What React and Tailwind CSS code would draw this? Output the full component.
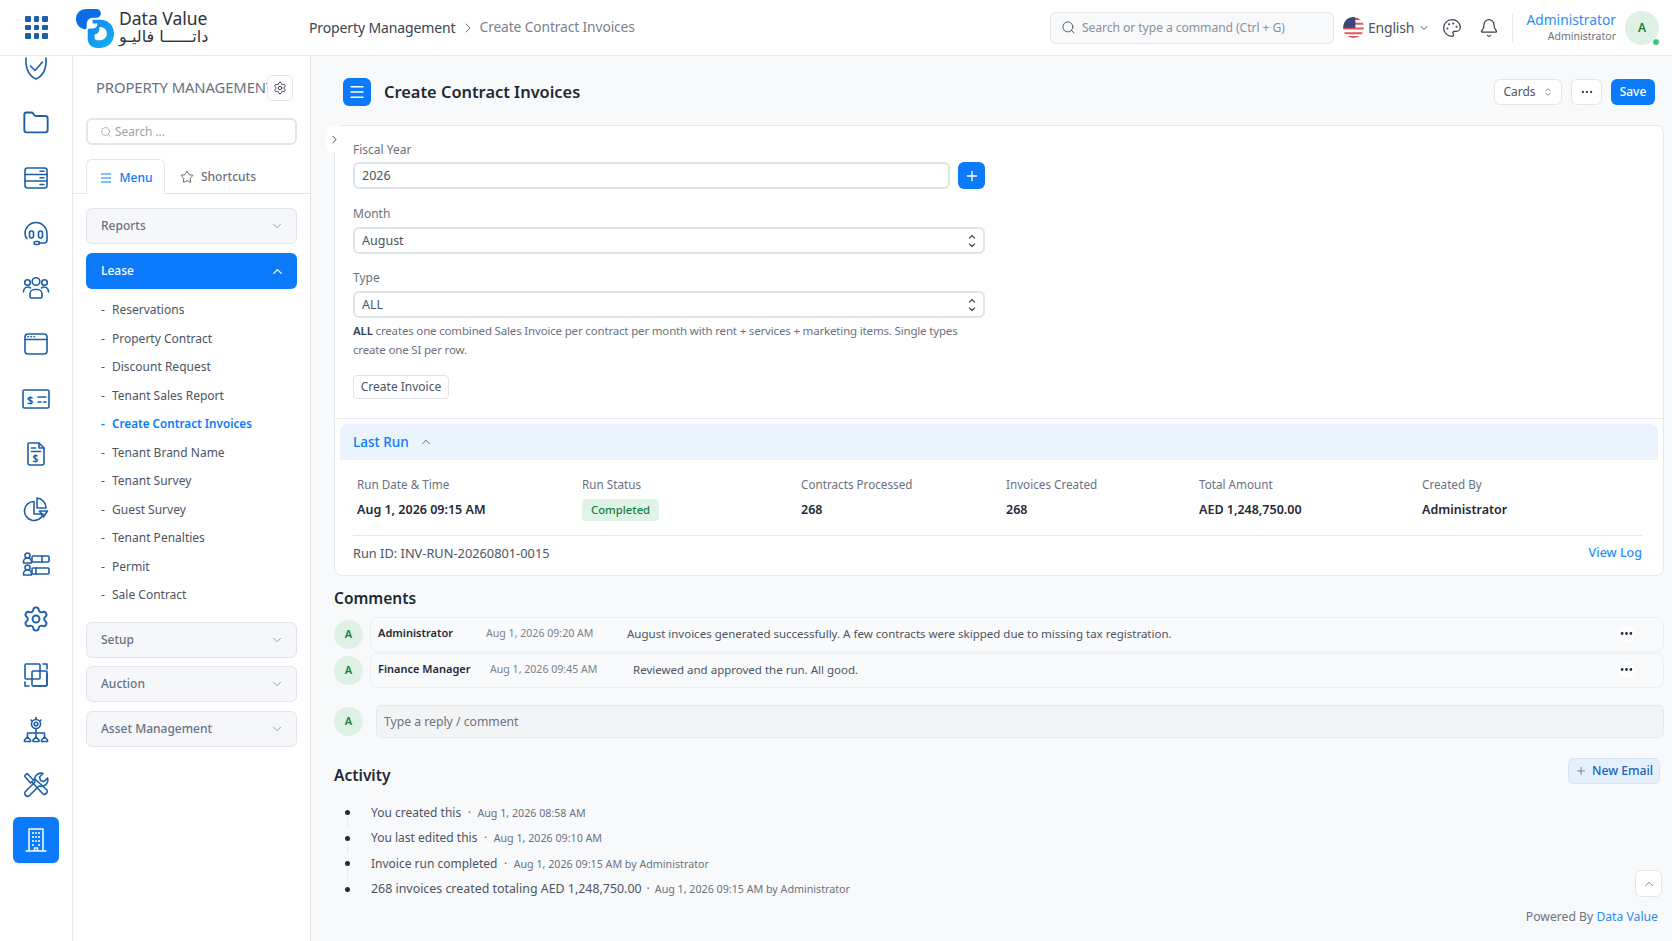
import React from 'react';
import {
  Folder, Settings, ChevronDown, ChevronUp, ChevronRight,
  ChevronsUpDown, Search, Menu, Star, Plus, MoreHorizontal, Palette, Bell,
} from 'lucide-react';

const S = ({ children, className = 'w-7 h-7' }) => (
  <svg viewBox="0 0 28 28" fill="none" stroke="currentColor" strokeWidth="1.6" strokeLinecap="round" strokeLinejoin="round" className={className}>
    {children}
  </svg>
);

const ShieldIcon = () => (
  <S>
    <path d="M4 4c-.5 9 1 17 10 21 9-4 10.500-12 10-21" />
    <path d="m8.500 12 4.500 4.500L20.500 8" />
  </S>
);
const ServerIcon = () => (
  <S>
    <rect x="3" y="4" width="22" height="20" rx="2.5" />
    <path d="M3 10.500h22M3 17h22M18 7.200h4M18 13.800h4M18 20.500h4" />
  </S>
);
const HeadsetIcon = () => (
  <S>
    <path d="M5 19.500C3.500 18 3 16 3 14.500a11 11 0 0 1 22 0V21a3 3 0 0 1-3 3h-5" />
    <rect x="7.500" y="12" width="4" height="7" rx="2" />
    <rect x="16.500" y="12" width="4" height="7" rx="2" />
    <rect x="12" y="22.500" width="5.500" height="3" rx="1.500" />
  </S>
);
const GroupIcon = () => (
  <S>
    <circle cx="14" cy="7.500" r="3.800" />
    <circle cx="5.500" cy="8.500" r="2.800" />
    <circle cx="22.500" cy="8.500" r="2.800" />
    <path d="M8 23v-3a4.500 4.500 0 0 1 4.500-4.500h3A4.500 4.500 0 0 1 20 20v3a1 1 0 0 1-1 1H9a1 1 0 0 1-1-1Z" />
    <path d="M1.500 18c0-3 2-5 4.500-5 1 0 2 .3 2.500 1M26.500 18c0-3-2-5-4.500-5-1 0-2 .3-2.500 1" />
  </S>
);
const WindowIcon = () => (
  <S>
    <rect x="3" y="4" width="22" height="20" rx="3" />
    <path d="M3 9.500h22M6 6.800h.5M9 6.800h.5M12 6.800h.5" />
  </S>
);
const CardIcon = () => (
  <S>
    <rect x="1" y="5" width="26" height="18" rx="1.500" />
    <path d="M16 12h8M16 17h3M21.500 17H24" />
    <text x="5" y="18.500" fontSize="11" fontWeight="700" fill="currentColor" stroke="none">$</text>
  </S>
);
const BillIcon = () => (
  <S>
    <path d="M7 3h10l5 5v15a2 2 0 0 1-2 2H8a2 2 0 0 1-2-2V4a1 1 0 0 1 1-1Z" />
    <path d="M17 3v5h5M9.500 8h4M9.500 11.500h9" />
    <text x="10.500" y="22" fontSize="10" fontWeight="700" fill="currentColor" stroke="none">$</text>
  </S>
);
const PieIcon = () => (
  <S>
    <path d="M12 6.500a9.500 9.500 0 1 0 9 12.500h-9Z" />
    <path d="M15 3v10h9a10 10 0 0 0-9-10ZM17.500 16h8l-4 6Z" />
  </S>
);
const PeopleBarsIcon = () => (
  <S>
    <circle cx="5.500" cy="5.500" r="2.500" />
    <path d="M1.500 13v-1a4 4 0 0 1 8 0v1Z" />
    <rect x="10" y="6" width="17" height="6" rx="1" />
    <path d="M20 6v6" />
    <circle cx="5.500" cy="17.500" r="2.500" />
    <path d="M1.500 25v-1a4 4 0 0 1 8 0v1Z" />
    <rect x="10" y="18" width="17" height="6" rx="1" />
    <path d="M14 18v6" />
  </S>
);
const SquaresIcon = () => (
  <S>
    <path d="M21 3h4v5M25 13v10a2 2 0 0 1-2 2H12M7 25H3v-4" />
    <rect x="3" y="3" width="15" height="15" rx="1" />
    <rect x="10" y="10" width="15" height="15" rx="1" />
  </S>
);
const OrgIcon = () => (
  <S>
    <circle cx="14" cy="8" r="4.500" />
    <circle cx="14" cy="8" r="1.800" />
    <path d="M14 1.500v2M9 4l1 1M19 4l-1 1M14 12.500V17M5.500 21v-4h17v4M14 17v4" />
    <path d="M2.500 25.500v-1.500l3-3 3 3v1.500ZM11 25.500v-1.500l3-3 3 3v1.500ZM19.500 25.500v-1.500l3-3 3 3v1.500Z" />
  </S>
);
const ToolsIcon = () => (
  <S>
    <path d="M5 2.500 2.500 5l6 7 3-3ZM10 11l11 12a3 3 0 0 0 4-4L13 8" />
    <path d="M25.500 7 22 10.500 18.500 9.500 17.500 6 21 2.500a6.500 6.500 0 0 0-8 8.500L3 21a3 3 0 0 0 4 4l10-10a6.500 6.500 0 0 0 8.500-8Z" />
  </S>
);
const BuildingIcon = () => (
  <S>
    <path d="M7 25V3h14v22M4 25h20M12.500 25v-3h3v3" strokeWidth="1.500" />
    <path d="M11 7h.01M14 7h.01M17 7h.01M11 11h.01M14 11h.01M17 11h.01M11 15h.01M14 15h.01M17 15h.01M11 19h.01M17 19h.01" strokeWidth="2" />
  </S>
);
const UpDown = () => (
  <svg viewBox="0 0 10 16" fill="none" stroke="currentColor" strokeWidth="1.300" strokeLinecap="round" strokeLinejoin="round" className="w-[10px] h-[16px]">
    <path d="m2.500 5 2.500-2.500L7.500 5M2.500 11 5 13.500 7.500 11" />
  </svg>
);

const railIcons = [
  <ShieldIcon />,
  <Folder className="w-7 h-7" strokeWidth={1.6} />,
  <ServerIcon />,
  <HeadsetIcon />,
  <GroupIcon />,
  <WindowIcon />,
  <CardIcon />,
  <BillIcon />,
  <PieIcon />,
  <PeopleBarsIcon />,
  <Settings className="w-7 h-7" strokeWidth={1.6} />,
  <SquaresIcon />,
  <OrgIcon />,
  <ToolsIcon />,
];

const leaseItems = [
  'Reservations', 'Property Contract', 'Discount Request', 'Tenant Sales Report', 'Create Contract Invoices',
  'Tenant Brand Name', 'Tenant Survey', 'Guest Survey', 'Tenant Penalties', 'Permit', 'Sale Contract',
];

const runStats = [
  { label: 'Run Date & Time', value: 'Aug 1, 2026 09:15 AM' },
  { label: 'Run Status', badge: 'Completed' },
  { label: 'Contracts Processed', value: '268' },
  { label: 'Invoices Created', value: '268' },
  { label: 'Total Amount', value: 'AED 1,248,750.00' },
  { label: 'Created By', value: 'Administrator' },
];

const comments = [
  { name: 'Administrator', nameW: 'w-[108px]', date: 'Aug 1, 2026 09:20 AM', dateW: 'w-[141px]', text: 'August invoices generated successfully. A few contracts were skipped due to missing tax registration.' },
  { name: 'Finance Manager', nameW: 'w-[112px]', date: 'Aug 1, 2026 09:45 AM', dateW: 'w-[143px]', text: 'Reviewed and approved the run. All good.' },
];

const activity = [
  { text: 'You created this', meta: 'Aug 1, 2026 08:58 AM' },
  { text: 'You last edited this', meta: 'Aug 1, 2026 09:10 AM' },
  { text: 'Invoice run completed', meta: 'Aug 1, 2026 09:15 AM by Administrator' },
  { text: '268 invoices created totaling AED 1,248,750.00', meta: 'Aug 1, 2026 09:15 AM by Administrator', wide: true },
];

const Logo = () => (
  <div className="flex items-center gap-[4px] pl-[3px]">
    <svg viewBox="0 0 40 41" className="w-[39px] h-[40px] shrink-0">
      <defs>
        <linearGradient id="dv" x1="0" y1="0" x2="1" y2="1">
          <stop offset="0" stopColor="#0f86f2" />
          <stop offset="1" stopColor="#1ab0f0" />
        </linearGradient>
      </defs>
      <path d="M10 1h11a4.500 4.500 0 0 1 0 9h-4a6 6 0 0 0-6 6v3.500a3 3 0 0 1-1.500 2.500C4 21 0 17 0 11A10 10 0 0 1 10 1Z" fill="#0a6ce8" />
      <path fillRule="evenodd" d="M17 12h8c8 0 14 6 14 14.500S33 41 25 41h-3c-6 0-10-4-10-10V23a2 2 0 0 1 2-2h4a5 5 0 0 0 4-4.500V16h-5ZM24 19.500v2.500a5 5 0 0 1-5 5v3a3 3 0 0 0 3 3h3a6.500 6.500 0 0 0 0-13.500Z" fill="url(#dv)" />
    </svg>
    <div className="leading-none text-[#2c3440]">
      <div className="text-[17.500px] leading-[19px]">Data Value</div>
      <div className="text-[16px] leading-[18px] font-['DejaVu_Sans',sans-serif]" dir="rtl">داتــــــا فاليـو</div>
    </div>
  </div>
);

const Flag = () => (
  <svg viewBox="0 0 22 22" className="w-[21px] h-[21px]">
    <defs>
      <clipPath id="fl"><circle cx="11" cy="11" r="11" /></clipPath>
    </defs>
    <g clipPath="url(#fl)">
      <rect width="22" height="22" fill="#fff" />
      <path d="M0 2h22M0 7h22M0 12h22M0 17h22M0 21h22" stroke="#e0595f" strokeWidth="2.200" />
      <rect width="13" height="11.500" fill="#3b4a7c" />
    </g>
  </svg>
);

const Header = () => (
  <header className="h-[56px] shrink-0 bg-white border-b border-[#e6e8ec] flex items-center text-[#4b5563]">
    <div className="w-[73px] flex justify-center">
      <div className="grid grid-cols-3 gap-[3px]">
        {Array.from({ length: 9 }).map((_, i) => (
          <span key={i} className="w-[5.500px] h-[5.500px] bg-[#1d5ea8] rounded-[1px]" />
        ))}
      </div>
    </div>
    <div className="w-[236px]"><Logo /></div>
    <div className="flex items-center text-[14px] tracking-[-0.12px]">
      <span className="text-[#3b4350]">Property Management</span>
      <ChevronRight className="w-4 h-4 mx-[4px] text-[#6b7280]" strokeWidth={1.5} />
      <span className="text-[#7a828e] text-[13.800px]">Create Contract Invoices</span>
    </div>
    <div className="ml-auto flex items-center">
      <div className="w-[284px] h-[32px] bg-[#f8f9fa] border border-[#e4e6ea] rounded-md flex items-center px-[10px] gap-[6px] text-[#8a919c]">
        <Search className="w-[15px] h-[15px] text-[#4b5563]" strokeWidth={1.5} />
        <span className="mt-[1px] text-[12.200px] tracking-[-0.1px] whitespace-nowrap">Search or type a command (Ctrl + G)</span>
      </div>
      <div className="ml-[9px] flex items-center gap-[4px] w-[99px]">
        <Flag />
        <span className="text-[14px] tracking-[-0.2px] text-[#4b5563]">English</span>
        <ChevronDown className="w-[12px] h-[12px] text-[#4b5563]" />
      </div>
      <Palette className="w-[20px] h-[20px] text-[#374151]" strokeWidth={1.5} />
      <Bell className="w-[20px] h-[20px] text-[#374151] ml-[17px]" strokeWidth={1.5} />
      <div className="w-px h-[28px] bg-[#e6e8ec] ml-[13px]" />
      <div className="ml-[13px] w-[90px] text-right leading-none">
        <div className="text-[13.800px] text-[#2b8df5]">Administrator</div>
        <div className="text-[10.500px] text-[#6b7280] mt-[4px]">Administrator</div>
      </div>
      <div className="relative ml-[9px] mr-[13px] w-[34px] h-[34px] rounded-full bg-[#dff1e5] text-[#15803d] text-[12px] font-semibold flex items-center justify-center">
        A
        <span className="absolute right-[-1px] bottom-[-1px] w-[8px] h-[8px] rounded-full bg-[#34c77b] border border-white" />
      </div>
    </div>
  </header>
);

const Rail = () => (
  <aside className="w-[73px] shrink-0 bg-white border-r border-[#e6e8ec] overflow-hidden">
    <div className="-mt-[16px] flex flex-col items-center">
      {railIcons.map((icon, i) => (
        <div key={i} className="h-[55.200px] w-full flex items-center justify-center text-[#1d5ea8]">
          {icon}
        </div>
      ))}
      <div className="w-[46px] h-[46px] mt-[4px] rounded-md bg-[#0b7bfb] text-white flex items-center justify-center shadow-sm">
        <BuildingIcon />
      </div>
    </div>
  </aside>
);

const AccordionHead = ({ label, mt = 'mt-[8.500px]' }) => (
  <div className={`${mt} h-[36px] mx-[13px] rounded-md bg-[#f5f7fb] border border-[#e2e5ea] flex items-center justify-between pl-[14px] pr-[12px] text-[#6b7280]`}>
    <span className="text-[12px] font-medium">{label}</span>
    <ChevronDown className="w-[14px] h-[14px] text-[#8a919c]" strokeWidth={1.5} />
  </div>
);

const Sidebar = () => (
  <aside className="w-[238px] shrink-0 bg-white border-r border-[#e6e8ec] overflow-hidden">
    <div className="mt-[19px] h-[26px] flex items-center pl-[23px] pr-[17px]">
      <div className="flex-1 min-w-0 pb-[2px] overflow-hidden whitespace-nowrap text-[14.800px] tracking-[-0.1px] text-[#6b7280] leading-[25px]">PROPERTY MANAGEMENT</div>
      <div className="w-[26px] h-[26px] shrink-0 rounded-md bg-white border border-[#e2e5ea] flex items-center justify-center text-[#374151]">
        <Settings className="w-[14px] h-[14px]" strokeWidth={1.6} />
      </div>
    </div>
    <div className="mt-[17px] mx-[13px] h-[27px] rounded-md border-2 border-[#e2e5ea] bg-white flex items-center pl-[12px] gap-[3px] text-[#9aa1ab]">
      <Search className="w-[12px] h-[12px]" strokeWidth={1.6} />
      <span className="text-[11.800px]">Search ...</span>
    </div>
    <div className="mt-[14px] h-[35px] border-b border-[#e2e5ea] flex pl-[13px] text-[12px] font-medium">
      <div className="w-[79px] h-[35px] pt-[2px] bg-white border border-[#e2e5ea] border-b-white rounded-t-md flex items-center justify-center gap-[7px] text-[#0b7bfb]">
        <Menu className="w-[14px] h-[14px]" strokeWidth={1.8} />
        Menu
      </div>
      <div className="ml-[15px] pt-[2px] flex items-center gap-[7px] text-[#6b7280]">
        <Star className="w-[14px] h-[14px] text-[#4b5563]" strokeWidth={1.5} />
        Shortcuts
      </div>
    </div>
    <AccordionHead label="Reports" mt="mt-[14px]" />
    <div className="mt-[9px] h-[36px] mx-[13px] rounded-md bg-[#0b7bfb] flex items-center justify-between pl-[15px] pr-[12px] text-white">
      <span className="text-[12px] font-medium">Lease</span>
      <ChevronUp className="w-[15px] h-[15px]" strokeWidth={2} />
    </div>
    <ul className="mt-[7px] pl-[28px] text-[12px] text-[#4b5563]">
      {leaseItems.map((item) => {
        const active = item === 'Create Contract Invoices';
        return (
          <li key={item} className={`h-[28.500px] flex items-center ${active ? 'text-[#0b7bfb] font-semibold text-[11.700px]' : ''}`}>
            <span className="w-[11px]">-</span>
            {item}
          </li>
        );
      })}
    </ul>
    <AccordionHead label="Setup" mt="mt-[12px]" />
    <AccordionHead label="Auction" />
    <AccordionHead label="Asset Management" />
  </aside>
);

const Field = ({ label, value, select, mt = 'mt-[9px]', gap = 'mt-[4px]' }) => (
  <div className={mt}>
    <label className="block text-[12px] leading-[18px] text-[#6b7280]">{label}</label>
    <div className={`${gap} h-[27px] rounded-md border-2 border-[#dfe2e6] bg-white flex items-center justify-between pl-[7px] pr-[6px] text-[12.500px] text-[#4b5563]`}>
      <span className="pt-[1px]">{value}</span>
      {select && <UpDown />}
    </div>
  </div>
);

const CreateForm = () => (
  <div className="relative bg-white border border-[#e6e8ec] rounded-t-lg">
    <div className="absolute left-[-9px] top-[0px] w-[16px] h-[26px] bg-white rounded-l-md flex items-center justify-center text-[#374151]">
      <ChevronRight className="w-[13px] h-[13px]" strokeWidth={1.8} />
    </div>
    <div className="pl-[18px] pt-[15px] w-[650px] pb-[19px]">
      <div className="flex items-end gap-[8px]">
        <div className="flex-1">
          <Field label="Fiscal Year" value="2026" mt="mt-0" gap="mt-[3px]" />
        </div>
        <button className="w-[27px] h-[27px] rounded-md bg-[#0b7bfb] text-white flex items-center justify-center">
          <Plus className="w-[16px] h-[16px]" strokeWidth={2} />
        </button>
      </div>
      <Field label="Month" value="August" select mt="mt-[16px]" />
      <Field label="Type" value="ALL" select mt="mt-[15px]" />
      <p className="mt-[3px] w-[620px] text-[11.500px] leading-[19px] text-[#6b7280] tracking-[-0.17px]">
        <b className="font-semibold text-[#374151]">ALL</b> creates one combined Sales Invoice per contract per month with rent + services + marketing items. Single types create one SI per row.
      </p>
      <button className="mt-[16px] h-[24px] w-[96px] rounded-[4px] border border-[#dfe2e6] bg-white text-[12px] text-[#4b5563]">Create Invoice</button>
    </div>
  </div>
);

const LastRun = () => (
  <div className="bg-white border border-t-0 border-[#e6e8ec] rounded-b-lg px-[5px] pt-[5px]">
    <div className="h-[36px] bg-[#ebf4fd] rounded-t-lg flex items-center pl-[13px] gap-[10px] text-[#0b7bfb] text-[13.500px] font-medium">
      Last Run
      <ChevronUp className="w-[14px] h-[14px] text-[#4b5563]" strokeWidth={1.5} />
    </div>
    <div className="pl-[13px] pr-[16px] pb-[12px]">
      <div className="pt-[15px] pb-[13px] pl-[4px] border-b border-[#e6e8ec] grid grid-cols-[225px_219px_205px_193px_223px_1fr]">
        {runStats.map((s) => (
          <div key={s.label}>
            <div className="text-[11.700px] leading-[18px] text-[#6b7280]">{s.label}</div>
            <div className="mt-[5px] h-[24px] flex items-center text-[12.500px] font-semibold text-[#1f2937]">
              {s.badge ? (
                <span className="px-[9px] h-[22px] rounded bg-[#e0f3e7] text-[#15803d] text-[11.300px] font-medium flex items-center">{s.badge}</span>
              ) : s.value}
            </div>
          </div>
        ))}
      </div>
      <div className="mt-[8px] flex items-center justify-between text-[12.800px] text-[#4b5563]">
        <span>Run ID: INV-RUN-20260801-0015</span>
        <span className="text-[#2b8df5] font-medium text-[12.500px]">View Log</span>
      </div>
    </div>
  </div>
);

const Avatar = () => (
  <div className="w-[29px] h-[29px] shrink-0 rounded-full bg-[#dff1e5] text-[#15803d] text-[11px] font-semibold flex items-center justify-center">A</div>
);

const Comments = () => (
  <section>
    <h2 className="mt-[11px] text-[15.500px] leading-[22px] font-semibold text-[#1f2937]">Comments</h2>
    <div className="mt-[8px] space-y-[1px]">
      {comments.map((c) => (
        <div key={c.name} className="flex items-center gap-[7px]">
          <Avatar />
          <div className="flex-1 h-[35px] pb-[2px] rounded-lg border border-[#eceef1] bg-[#f9fafb] flex items-center pl-[7px] pr-[28px] text-[11.500px]">
            <span className={`${c.nameW} text-[11px] font-semibold text-[#1f2937]`}>{c.name}</span>
            <span className={`${c.dateW} text-[10.600px] text-[#7a828e]`}>{c.date}</span>
            <span className="text-[#4b5563]">{c.text}</span>
            <span className="ml-auto w-[17px] h-[17px] rounded-full bg-white flex items-center justify-center text-[#1f2937]">
              <MoreHorizontal className="w-[15px] h-[15px]" strokeWidth={2.5} />
            </span>
          </div>
        </div>
      ))}
    </div>
    <div className="mt-[17px] flex items-center gap-[13px]">
      <Avatar />
      <div className="flex-1 h-[33px] rounded-md border border-[#e6e8ec] bg-[#f3f4f6] flex items-center pl-[7px] text-[12.200px] text-[#6b7280]">Type a reply / comment</div>
    </div>
  </section>
);

const Activity = () => (
  <section className="relative">
    <div className="mt-[20px] flex items-start justify-between">
      <h2 className="mt-[6px] text-[15.500px] leading-[22px] font-semibold text-[#1f2937]">Activity</h2>
      <button className="mr-[4px] h-[26px] w-[92px] rounded-md bg-[#e5f0fc] border border-[#d3e5f9] text-[12.200px] font-medium text-[#1565c0] flex items-center justify-center gap-[5px]">
        <Plus className="w-[12px] h-[12px] text-[#6b7280]" strokeWidth={1.8} />
        New Email
      </button>
    </div>
    <ul className="mt-[14px] pl-[11px]">
      {activity.map((a, i) => (
        <li key={a.text} className="relative h-[25.500px] flex items-center text-[12px]">
          {i < activity.length - 1 && <span className="absolute left-[2px] top-[17px] w-px h-[11px] bg-[#e6e8ec]" />}
          <span className="w-[5px] h-[5px] rounded-full bg-[#1f2937] mr-[21px]" />
          <span className={`text-[#4b5563] ${a.wide ? 'text-[12.400px]' : ''}`}>{a.text}</span>
          <span className={`text-[#6b7280] ${a.wide ? 'mx-[5px]' : 'mx-[6.500px]'}`}>·</span>
          <span className="text-[10.700px] text-[#6b7280]">{a.meta}</span>
        </li>
      ))}
    </ul>
    <div className="absolute right-[2px] top-[112px] w-[27px] h-[27px] rounded-md bg-white border border-[#e2e5ea] flex items-center justify-center text-[#6b7280]">
      <ChevronUp className="w-[14px] h-[14px]" strokeWidth={1.5} />
    </div>
    <div className="mt-[6px] pr-[6px] text-right text-[12.200px] text-[#6b7280]">
      Powered By <span className="text-[#2b8df5]">Data Value</span>
    </div>
  </section>
);

const App = () => (
  <div className="h-screen overflow-hidden flex flex-col bg-[#f8f9fb] font-['Noto_Sans',sans-serif]">
    <Header />
    <div className="flex-1 min-h-0 flex">
      <Rail />
      <Sidebar />
      <main className="flex-1 min-w-0 pl-[23px] pr-[8px] overflow-hidden">
        <div className="h-[69px] pt-[2px] flex items-center justify-between pr-[9px]">
          <div className="flex items-center gap-[13px] ml-[9px]">
            <div className="w-[28px] h-[28px] rounded-md bg-[#0b7bfb] text-white flex items-center justify-center">
              <Menu className="w-[18px] h-[18px]" strokeWidth={2} />
            </div>
            <h1 className="mt-[2px] text-[16.400px] font-semibold text-[#1f2937]">Create Contract Invoices</h1>
          </div>
          <div className="flex items-center text-[12px]">
            <div className="w-[68px] h-[26px] rounded-md border border-[#e2e5ea] bg-white flex items-center justify-center gap-[7px] text-[#4b5563]">
              Cards
              <ChevronsUpDown className="w-[10px] h-[10px]" strokeWidth={1.6} />
            </div>
            <div className="ml-[9px] w-[31px] h-[26px] rounded-md border border-[#e2e5ea] bg-white flex items-center justify-center text-[#374151]">
              <MoreHorizontal className="w-[14px] h-[14px]" strokeWidth={2} />
            </div>
            <button className="ml-[9px] w-[44px] h-[26px] rounded-md bg-[#0b7bfb] text-white font-medium">Save</button>
          </div>
        </div>
        <CreateForm />
        <LastRun />
        <Comments />
        <Activity />
      </main>
    </div>
  </div>
);

export default App;
